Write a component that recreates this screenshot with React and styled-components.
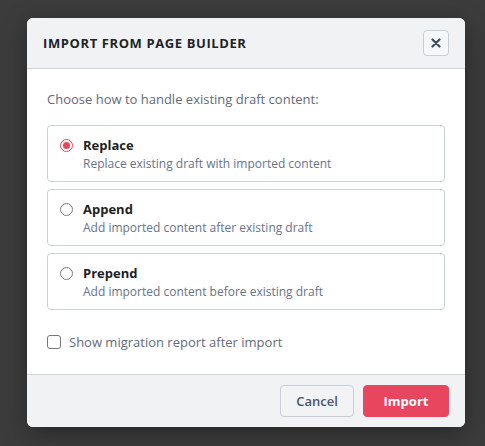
import React, { useState } from 'react'
import styled, { createGlobalStyle } from 'styled-components'

const GlobalStyle = createGlobalStyle`
  html, body {
    margin: 0;
    padding: 0;
    background: #3c3c3c;
    font-family: "Open Sans", "Liberation Sans", sans-serif;
  }
`

const Backdrop = styled.div`
  min-height: 446px;
  padding: 18px 0 0 27px;
  box-sizing: border-box;
`

const Modal = styled.div`
  width: 438px;
  background: #ffffff;
  border-radius: 6px;
  overflow: hidden;
  box-shadow: 0 6px 24px rgba(0, 0, 0, 0.35);
`

const Header = styled.div`
  height: 50px;
  display: flex;
  align-items: center;
  justify-content: space-between;
  padding: 0 16px;
  background: #f0f2f4;
  border-bottom: 1px solid #cdd5de;
`

const Title = styled.h2`
  margin: 0;
  font-size: 13px;
  font-weight: 700;
  letter-spacing: 0.6px;
  color: #1f2328;
`

const CloseButton = styled.button`
  width: 26px;
  height: 26px;
  display: flex;
  align-items: center;
  justify-content: center;
  padding: 0;
  border: 1px solid #c5ced9;
  border-radius: 4px;
  background: #f5f7f9;
  cursor: pointer;
`

const Body = styled.div`
  padding: 20px 20px 22px;
`

const Intro = styled.p`
  margin: 0 0 16px;
  font-size: 13px;
  line-height: 20px;
  color: #5f6b7a;
`

const Options = styled.div`
  display: flex;
  flex-direction: column;
  gap: 7px;
`

const Option = styled.label`
  display: flex;
  gap: 10px;
  padding: 9px 12px 8px;
  border: 1px solid #c9d2dc;
  border-radius: 4px;
  cursor: pointer;
`

const Radio = styled.span`
  flex: none;
  width: 13px;
  height: 13px;
  margin-top: 4px;
  box-sizing: border-box;
  border-radius: 50%;
  border: 1px solid ${p => (p.$checked ? '#e8455f' : '#7a7a7a')};
  display: flex;
  align-items: center;
  justify-content: center;
  &::after {
    content: '';
    width: 7px;
    height: 7px;
    border-radius: 50%;
    background: ${p => (p.$checked ? '#e8455f' : 'transparent')};
  }
`

const OptionText = styled.div`
  display: flex;
  flex-direction: column;
`

const OptionLabel = styled.span`
  font-size: 13px;
  font-weight: 700;
  line-height: 20px;
  color: #1e1f22;
`

const OptionDesc = styled.span`
  font-size: 12px;
  line-height: 18px;
  color: #667489;
`

const CheckRow = styled.label`
  display: flex;
  align-items: center;
  gap: 8px;
  margin-top: 22px;
  font-size: 13px;
  line-height: 20px;
  color: #5f6b7a;
  cursor: pointer;
`

const Box = styled.span`
  width: 14px;
  height: 14px;
  box-sizing: border-box;
  border: 1px solid #767676;
  border-radius: 3px;
  background: #ffffff;
`

const Footer = styled.div`
  display: flex;
  justify-content: flex-end;
  gap: 9px;
  padding: 10px 16px;
  background: #f0f2f4;
  border-top: 1px solid #cdd5de;
`

const Button = styled.button`
  height: 32px;
  width: ${p => (p.$primary ? '86px' : '74px')};
  padding: 0;
  border-radius: 4px;
  font-family: inherit;
  font-size: 13px;
  font-weight: ${p => (p.$primary ? 700 : 600)};
  border: 1px solid ${p => (p.$primary ? '#e8455f' : '#c5ced9')};
  background: ${p => (p.$primary ? '#e8455f' : '#f1f3f5')};
  color: ${p => (p.$primary ? '#ffffff' : '#4a5566')};
  cursor: pointer;
`

const choices = [
  { id: 'replace', label: 'Replace', desc: 'Replace existing draft with imported content' },
  { id: 'append', label: 'Append', desc: 'Add imported content after existing draft' },
  { id: 'prepend', label: 'Prepend', desc: 'Add imported content before existing draft' },
]

export default function App() {
  const [mode, setMode] = useState('replace')

  return (
    <Backdrop>
      <GlobalStyle />
      <Modal>
        <Header>
          <Title>IMPORT FROM PAGE BUILDER</Title>
          <CloseButton aria-label="Close">
            <svg width="10" height="10" viewBox="0 0 10 10">
              <path d="M1.5 1.5 L8.5 8.5 M8.5 1.5 L1.5 8.5" stroke="#3d4a5c" strokeWidth="2.2" strokeLinecap="round" />
            </svg>
          </CloseButton>
        </Header>
        <Body>
          <Intro>Choose how to handle existing draft content:</Intro>
          <Options>
            {choices.map(c => (
              <Option key={c.id} onClick={() => setMode(c.id)}>
                <Radio $checked={mode === c.id} />
                <OptionText>
                  <OptionLabel>{c.label}</OptionLabel>
                  <OptionDesc>{c.desc}</OptionDesc>
                </OptionText>
              </Option>
            ))}
          </Options>
          <CheckRow>
            <Box />
            Show migration report after import
          </CheckRow>
        </Body>
        <Footer>
          <Button>Cancel</Button>
          <Button $primary>Import</Button>
        </Footer>
      </Modal>
    </Backdrop>
  )
}
